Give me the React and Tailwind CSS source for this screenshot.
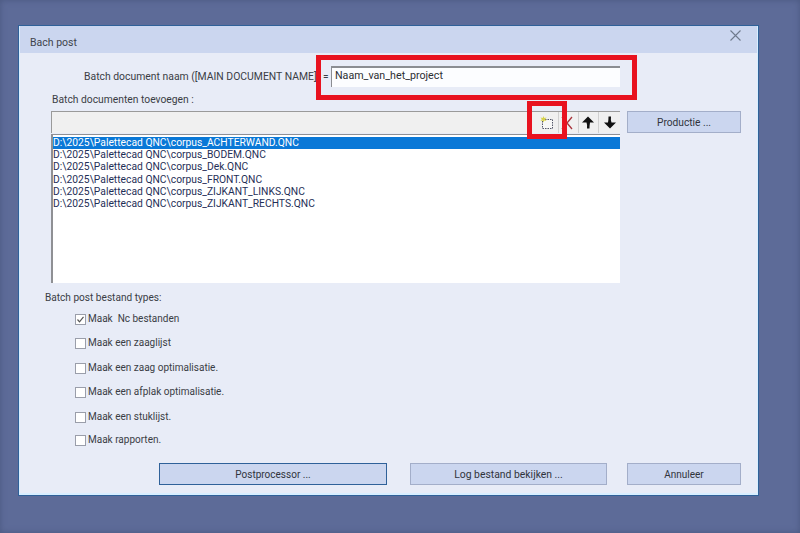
const FILES = [
  "D:\\2025\\Palettecad QNC\\corpus_ACHTERWAND.QNC",
  "D:\\2025\\Palettecad QNC\\corpus_BODEM.QNC",
  "D:\\2025\\Palettecad QNC\\corpus_Dek.QNC",
  "D:\\2025\\Palettecad QNC\\corpus_FRONT.QNC",
  "D:\\2025\\Palettecad QNC\\corpus_ZIJKANT_LINKS.QNC",
  "D:\\2025\\Palettecad QNC\\corpus_ZIJKANT_RECHTS.QNC",
];

const OPTIONS = [
  { label: "Maak  Nc bestanden", checked: true, mt: "mt-[8px]" },
  { label: "Maak een zaaglijst", mt: "mt-[12px]" },
  { label: "Maak een zaag optimalisatie.", mt: "mt-[13px]" },
  { label: "Maak een afplak optimalisatie.", mt: "mt-[12px]" },
  { label: "Maak een stuklijst.", mt: "mt-[13px]" },
  { label: "Maak rapporten.", mt: "mt-[11px]" },
];

function Checkbox({ checked }) {
  return (
    <span className="w-[11px] h-[11px] bg-white border border-[#9a9eaa] flex items-center justify-center shrink-0">
      {checked && (
        <svg width="9" height="9" viewBox="0 0 9 9" fill="none" stroke="#555" strokeWidth="1.2">
          <path d="M1.5 4.5 L3.5 6.8 L7.5 1.8" />
        </svg>
      )}
    </span>
  );
}

function ToolButton({ children, className = "" }) {
  return (
    <div className={`h-[21px] border-l border-[#d0d0d0] flex items-center justify-center ${className}`}>
      {children}
    </div>
  );
}

function Btn({ children, className = "" }) {
  return (
    <button className={`bg-[#cbd6ef] border text-[#30343c] ${className}`}>
      {children}
    </button>
  );
}

export default function App() {
  return (
    <div className="relative w-[800px] h-[533px] bg-[#5d6b98] shadow-[inset_0_0_6px_#4a5880] pt-[25px] pl-[18px] overflow-hidden font-['Roboto',sans-serif]">
      <div className="w-[741px] h-[471px] bg-[#e8ecf7] border border-[#2f6199] text-[#3a3d45] text-[10.1px] leading-[14px]">
        <div className="h-full flex flex-col border-x border-b-2 border-[#d8eeff]">
          {/* Title bar */}
          <div className="h-[27px] shrink-0 bg-[#cbd6ef] flex items-start justify-between pl-[10px] pr-[16px]">
            <span className="mt-[10px] text-[#40434b] text-[10.5px]">Bach post</span>
            <svg width="11" height="11" viewBox="0 0 11 11" stroke="#6f7a8c" strokeWidth="1.1" className="mt-[4px]">
              <path d="M0.5 0.5 L10.5 10.5 M10.5 0.5 L0.5 10.5" />
            </svg>
          </div>

          <div className="flex flex-col pl-[25px]">
            {/* Document name */}
            <div className="flex items-start mt-[13px]">
              <span className="ml-[39px] mt-[4px] w-[239px] whitespace-nowrap text-[10.4px]">Batch document naam ([MAIN DOCUMENT NAME]</span>
              <span className="mt-[4px] w-[8px]">=</span>
              <div className="w-[289px] h-[21px] bg-[#fcfdff] border-t-2 border-l border-[#8b8d92] pl-[3px] pt-[1px] text-[#2c2e33] text-[10.7px] leading-[14px]">
                Naam_van_het_project
              </div>
            </div>

            <div className="ml-[7px] mt-[6px] h-[14px] text-[10.3px]">Batch documenten toevoegen :</div>

            {/* Toolbar and list */}
            <div className="flex mt-[4px] ml-[6px]">
              <div className="w-[569px] flex flex-col">
                <div className="h-[22px] bg-[#f0f0f0] border-t border-l border-[#9a9a9a] flex justify-end">
                  <ToolButton className="w-[23px] border-l-0">
                    <svg width="14" height="14" viewBox="0 0 14 14" fill="none">
                      <rect x="2.5" y="3.5" width="10" height="9" fill="#f7f7f7" stroke="#55586a" strokeDasharray="1.5 1" />
                      <path d="M3.5 0 L4.3 2 L6.5 1.5 L5.2 3.3 L6.5 5 L4.3 4.6 L3.5 6.5 L2.7 4.6 L0.5 5 L1.8 3.3 L0.5 1.5 L2.7 2 Z" fill="#d7d24a" />
                    </svg>
                  </ToolButton>
                  <ToolButton className="w-[20px]">
                    <svg width="14" height="14" viewBox="0 0 14 14" fill="none" stroke="#a8343c" strokeWidth="1.3" className="-ml-[3px]">
                      <path d="M2 1 L12 13 M12 1 L2 13" />
                    </svg>
                  </ToolButton>
                  <ToolButton className="w-[20px]">
                    <svg width="12" height="13" viewBox="0 0 12 13" fill="#111" className="-ml-[1px]">
                      <path d="M6 0.5 L12 6.5 L8 6.5 Q7.5 9.5 7.5 12.5 L5 12.5 Q5.5 9 4.5 6.5 L0 6.5 Z" />
                    </svg>
                  </ToolButton>
                  <ToolButton className="w-[22px]">
                    <svg width="12" height="13" viewBox="0 0 12 13" fill="#111">
                      <path d="M6 12.5 L0 6.5 L4 6.5 Q4.5 3.5 4.5 0.5 L7 0.5 Q6.5 4 7.5 6.5 L12 6.5 Z" />
                    </svg>
                  </ToolButton>
                </div>
                <div className="h-[149px] mt-[1px] bg-white border-l-2 border-t border-[#8f9094] pt-[2px] text-[#1f2f57] text-[10.3px] leading-[12.2px]">
                  {FILES.map((f, i) => (
                    <div key={f} className={i === 0 ? "h-[12.2px] bg-[#0a78d7] text-white" : "h-[12.2px]"}>
                      {f}
                    </div>
                  ))}
                </div>
              </div>
              <Btn className="w-[114px] h-[22px] ml-[7px] pt-[1px] border-[#a3aec9] text-[10.2px]">Productie ...</Btn>
            </div>

            <div className="mt-[8px] h-[14px]">Batch post bestand types:</div>

            {/* Output types */}
            <div className="flex flex-col ml-[30px]">
              {OPTIONS.map((o) => (
                <div key={o.label} className={`flex items-center gap-[2px] h-[12px] text-[10px] ${o.mt}`}>
                  <Checkbox checked={o.checked} />
                  <span className="whitespace-pre">{o.label}</span>
                </div>
              ))}
            </div>
          </div>

          {/* Bottom buttons */}
          <div className="flex mt-[17px] ml-[139px]">
            <Btn className="w-[228px] h-[22px] pt-[2px] border-[#2f6199] text-[10px]">Postprocessor ...</Btn>
            <Btn className="w-[197px] h-[22px] ml-[23px] pt-[2px] border-[#a3aec9] text-[10.4px]">Log bestand bekijken ...</Btn>
            <Btn className="w-[114px] h-[22px] ml-[20px] pt-[2px] border-[#a3aec9] text-[10px]">Annuleer</Btn>
          </div>
        </div>
      </div>

      {/* Red callouts drawn over the screenshot */}
      <div className="absolute left-[316px] top-[55px] w-[321px] h-[45px] border-[5px] border-[#e8121f]" />
      <div className="absolute left-[527px] top-[101px] w-[40px] h-[38px] border-[5px] border-[#e8121f]" />
    </div>
  );
}
